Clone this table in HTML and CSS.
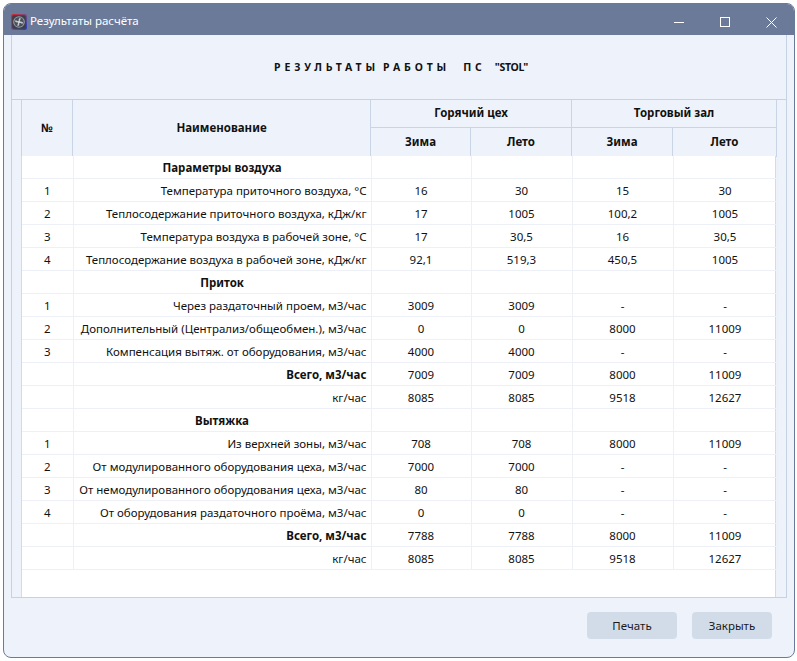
FILE: index.html
```html
<!DOCTYPE html>
<html lang="ru">
<head>
<meta charset="utf-8">
<title>Результаты расчёта</title>
<link rel="stylesheet" href="styles.css">
</head>
<body>
<div class="window">
  <div class="titlebar">
    <svg class="appicon" width="16" height="16" viewBox="0 0 16 16">
      <defs>
        <linearGradient id="fr" x1="0" y1="0" x2="1" y2="1">
          <stop offset="0" stop-color="#e02020"/>
          <stop offset="0.5" stop-color="#7a4a8a"/>
          <stop offset="1" stop-color="#2040c0"/>
        </linearGradient>
      </defs>
      <rect x="0" y="0" width="16" height="16" rx="2.5" fill="url(#fr)"/>
      <rect x="1.2" y="1.2" width="13.6" height="13.6" rx="1.5" fill="#3a3f4a"/>
      <circle cx="8" cy="8" r="5.8" fill="#9aa0aa"/>
      <circle cx="8" cy="8" r="4.8" fill="#4a505a"/>
      <path d="M8 8 C7 5.5 8 4 9.5 3.8 C9.8 5.5 9 7 8 8 Z M8 8 C10.5 7 12 8 12.2 9.5 C10.5 9.8 9 9 8 8 Z M8 8 C9 10.5 8 12 6.5 12.2 C6.2 10.5 7 9 8 8 Z M8 8 C5.5 9 4 8 3.8 6.5 C5.5 6.2 7 7 8 8 Z" fill="#c8ccd2"/>
      <circle cx="8" cy="8" r="1" fill="#e8eaee"/>
    </svg>
    <span class="wintitle">Результаты расчёта</span>
    <div class="controls">
      <div class="ctl"><svg width="10" height="10" viewBox="0 0 10 10"><path d="M0 5.5 H10" stroke="#fff" stroke-width="1"/></svg></div>
      <div class="ctl"><svg width="10" height="10" viewBox="0 0 10 10"><rect x="0.5" y="0.5" width="9" height="9" fill="none" stroke="#fff" stroke-width="1"/></svg></div>
      <div class="ctl"><svg width="11" height="11" viewBox="0 0 11 11"><path d="M0.5 0.5 L10.5 10.5 M10.5 0.5 L0.5 10.5" stroke="#fff" stroke-width="1"/></svg></div>
    </div>
  </div>
  <div class="client">
    <div class="panel">
      <div class="heading"><span class="sp">РЕЗУЛЬТАТЫ</span><span class="sp gap1">РАБОТЫ</span><span class="sp gap2">ПС</span><span class="stol">"STOL"</span></div>
      <div class="grid">
        <div class="gutter"></div>
        <div class="gridmain">
          <table class="head">
            <colgroup><col class="c1"><col class="c2"><col class="c3"><col class="c4"><col class="c5"><col class="c6"></colgroup>
            <tr class="h1"><th rowspan="2">№</th><th rowspan="2">Наименование</th><th colspan="2">Горячий цех</th><th colspan="2">Торговый зал</th></tr>
            <tr class="h2"><th>Зима</th><th>Лето</th><th>Зима</th><th>Лето</th></tr>
          </table>
          <div class="gbody">
            <table class="data">
              <colgroup><col class="c1"><col class="c2"><col class="c3"><col class="c4"><col class="c5"><col class="c6"></colgroup>
              <tr><td></td><td class="sec">Параметры воздуха</td><td></td><td></td><td></td><td></td></tr>
              <tr><td>1</td><td class="nm">Температура приточного воздуха, °С</td><td>16</td><td>30</td><td>15</td><td>30</td></tr>
              <tr><td>2</td><td class="nm">Теплосодержание приточного воздуха, кДж/кг</td><td>17</td><td>1005</td><td>100,2</td><td>1005</td></tr>
              <tr><td>3</td><td class="nm">Температура воздуха в рабочей зоне, °С</td><td>17</td><td>30,5</td><td>16</td><td>30,5</td></tr>
              <tr><td>4</td><td class="nm">Теплосодержание воздуха в рабочей зоне, кДж/кг</td><td>92,1</td><td>519,3</td><td>450,5</td><td>1005</td></tr>
              <tr><td></td><td class="sec">Приток</td><td></td><td></td><td></td><td></td></tr>
              <tr><td>1</td><td class="nm">Через раздаточный проем, м3/час</td><td>3009</td><td>3009</td><td>-</td><td>-</td></tr>
              <tr><td>2</td><td class="nm">Дополнительный (Централиз/общеобмен.), м3/час</td><td>0</td><td>0</td><td>8000</td><td>11009</td></tr>
              <tr><td>3</td><td class="nm">Компенсация вытяж. от оборудования, м3/час</td><td>4000</td><td>4000</td><td>-</td><td>-</td></tr>
              <tr><td></td><td class="nm b">Всего, м3/час</td><td>7009</td><td>7009</td><td>8000</td><td>11009</td></tr>
              <tr><td></td><td class="nm">кг/час</td><td>8085</td><td>8085</td><td>9518</td><td>12627</td></tr>
              <tr><td></td><td class="sec">Вытяжка</td><td></td><td></td><td></td><td></td></tr>
              <tr><td>1</td><td class="nm">Из верхней зоны, м3/час</td><td>708</td><td>708</td><td>8000</td><td>11009</td></tr>
              <tr><td>2</td><td class="nm">От модулированного оборудования цеха, м3/час</td><td>7000</td><td>7000</td><td>-</td><td>-</td></tr>
              <tr><td>3</td><td class="nm">От немодулированного оборудования цеха, м3/час</td><td>80</td><td>80</td><td>-</td><td>-</td></tr>
              <tr><td>4</td><td class="nm">От оборудования раздаточного проёма, м3/час</td><td>0</td><td>0</td><td>-</td><td>-</td></tr>
              <tr><td></td><td class="nm b">Всего, м3/час</td><td>7788</td><td>7788</td><td>8000</td><td>11009</td></tr>
              <tr><td></td><td class="nm">кг/час</td><td>8085</td><td>8085</td><td>9518</td><td>12627</td></tr>
            </table>
          </div>
        </div>
      </div>
    </div>
    <div class="buttons">
      <button class="btn print">Печать</button>
      <button class="btn close">Закрыть</button>
    </div>
  </div>
</div>
</body>
</html>
```
FILE: styles.css
```css
html, body {
  margin: 0;
  padding: 0;
  background: #ffffff;
}
body {
  font-family: "Noto Sans", "Open Sans", "DejaVu Sans", sans-serif;
  font-size: 11.5px;
  color: #111;
}
.window {
  margin: 3px 0 0 3px;
  width: 790px;
  height: 653px;
  border: 1px solid #6b7a98;
  border-radius: 8px;
  overflow: hidden;
  background: #eef3fb;
  display: flex;
  flex-direction: column;
}
.titlebar {
  height: 31px;
  flex: none;
  background: #6b7a99;
  display: flex;
  align-items: center;
  padding-left: 7px;
  color: #fff;
}
.appicon {
  flex: none;
  margin-top: 4px;
}
.wintitle {
  margin-left: 3px;
  font-size: 11.5px;
  margin-top: 1px;
}
.controls {
  margin-left: auto;
  display: flex;
  height: 100%;
}
.ctl {
  width: 46px;
  display: flex;
  align-items: center;
  justify-content: center;
  padding-top: 5px;
  box-sizing: border-box;
}
.client {
  flex: 1;
  display: flex;
  flex-direction: column;
  padding: 0 7px;
}
.panel {
  height: 563px;
  border-left: 1px solid #c6d2e2;
  border-right: 1px solid #c6d2e2;
  border-bottom: 1px solid #c6d2e2;
  display: flex;
  flex-direction: column;
  box-sizing: border-box;
}
.heading {
  height: 64px;
  flex: none;
  display: flex;
  align-items: center;
  justify-content: center;
  font-weight: bold;
  font-size: 10.5px;
  padding-left: 4px;
  padding-bottom: 1px;
  box-sizing: border-box;
}
.sp {
  letter-spacing: 3.9px;
}
.gap1 { margin-left: 4px; }
.gap2 { margin-left: 13px; }
.stol {
  margin-left: 9px;
  letter-spacing: -0.3px;
}
.grid {
  flex: 1;
  display: flex;
  border-top: 1px solid #c6d2e2;
}
.gutter {
  width: 9px;
  flex: none;
}
.gridmain {
  width: 755px;
  flex: none;
  display: flex;
  flex-direction: column;
}
table {
  border-collapse: collapse;
  table-layout: fixed;
  width: 755px;
}
col.c1 { width: 51px; }
col.c2 { width: 298px; }
col.c3 { width: 100px; }
col.c4 { width: 101px; }
col.c5 { width: 101px; }
col.c6 { width: 104px; }
.head th {
  border: 1px solid #c9d5e5;
  border-top: none;
  font-weight: bold;
  font-size: 11.5px;
  text-align: center;
  padding: 0;
  background: #eef3fb;
}
.head tr.h1 th { height: 25px; padding-bottom: 2px; }
.head tr.h2 th { height: 26px; padding-bottom: 2px; }
.gbody {
  flex: 1;
  background: #ffffff;
  border-left: 1px solid #d2dbe7;
  border-right: 1px solid #d2dbe7;
  margin-top: -1px;
}
.data td {
  height: 22px;
  padding: 0;
  text-align: center;
  border-right: 1px solid #edf1f7;
  border-bottom: 1px solid #edf1f7;
  white-space: nowrap;
  overflow: hidden;
}
.data td.nm {
  text-align: right;
  padding-right: 4px;
}
.data td.sec {
  font-weight: bold;
}
.data td.b {
  font-weight: bold;
}
.buttons {
  flex: 1;
  display: flex;
  justify-content: flex-end;
  align-items: flex-start;
  padding-top: 14px;
  padding-right: 15px;
  gap: 15px;
}
.btn {
  font-family: "Noto Sans", "Open Sans", "DejaVu Sans", sans-serif;
  font-size: 11.5px;
  color: #1a1a1a;
  background: #d2dce8;
  border: none;
  border-radius: 4px;
  height: 27px;
  padding: 0;
}
.btn.print { width: 90px; }
.btn.close { width: 80px; }
```
